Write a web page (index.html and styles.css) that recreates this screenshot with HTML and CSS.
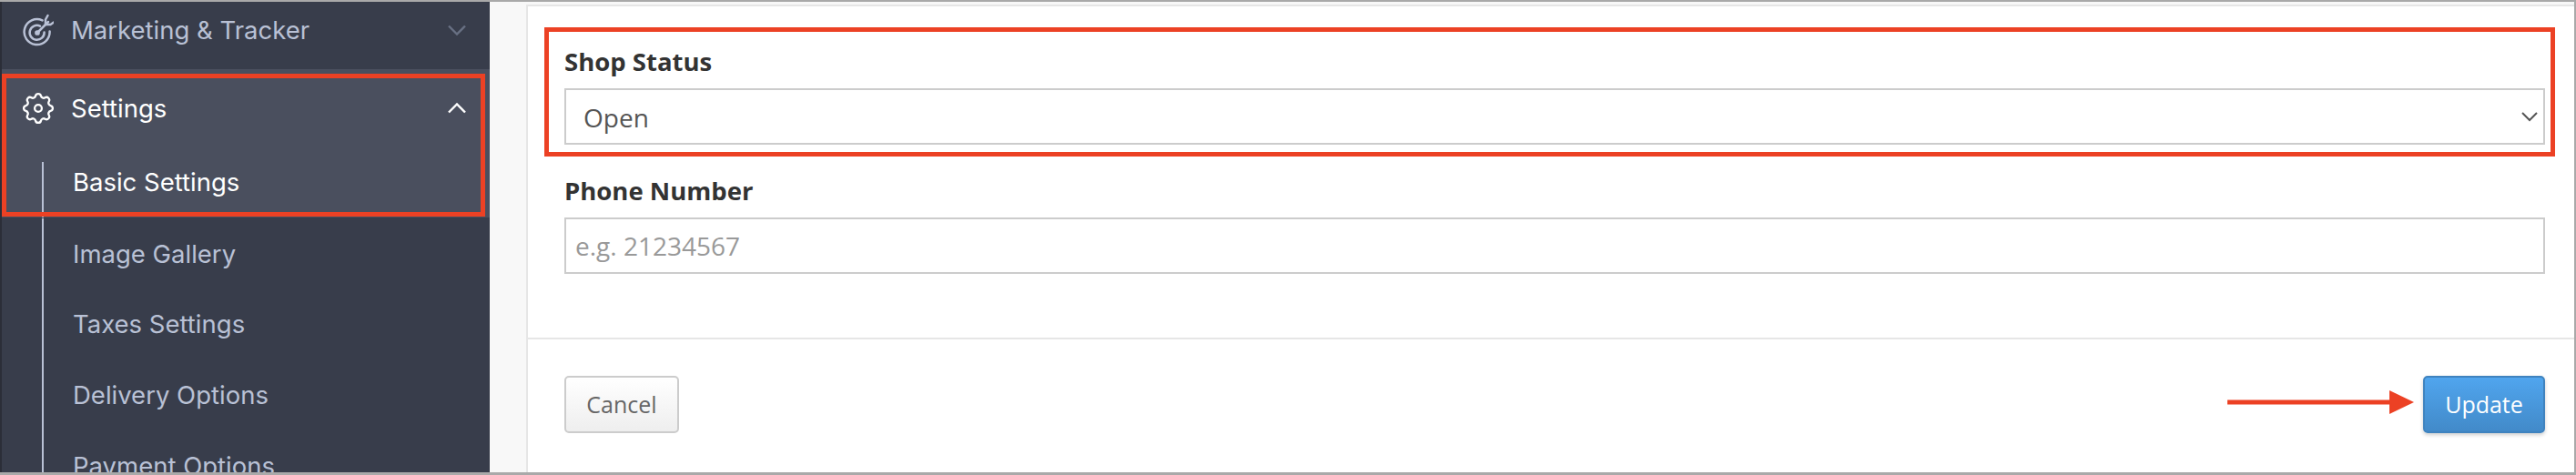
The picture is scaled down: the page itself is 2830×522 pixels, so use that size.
FILE: index.html
```html
<!DOCTYPE html>
<html lang="en">
<head>
    <meta charset="UTF-8">
    <title>Basic Settings</title>
    <link rel="stylesheet" href="styles.css">
</head>
<body>
    <div class="frame">
        <aside class="sidebar">
            <div class="nav-item nav-item-top">
                <svg class="nav-icon" viewBox="0 0 34 36" fill="none" stroke="currentColor" stroke-width="2.5" stroke-linecap="round" stroke-linejoin="round">
                    <path d="M21.5 7.4A14 14 0 1 0 29.6 19.5"/>
                    <path d="M19 13.6A8 8 0 1 0 23.6 20.5"/>
                    <circle cx="16" cy="21" r="1.6" fill="currentColor"/>
                    <path d="M16 21L28 9"/>
                    <path d="M25 12V6.5L27.5 2M25 12h5.5L34 9.5"/>
                </svg>
                <span class="nav-label">Marketing &amp; Tracker</span>
                <svg class="chevron chevron-muted" viewBox="0 0 20 12" fill="none" stroke="currentColor" stroke-width="2.4">
                    <path d="M1 1.5l9 9 9-9"/>
                </svg>
            </div>

            <div class="nav-group">
                <div class="nav-item nav-item-open">
                    <svg class="nav-icon" viewBox="2.4 2.4 19.2 19.2" fill="none" stroke="currentColor" stroke-width="1.3" stroke-linecap="round" stroke-linejoin="round">
                        <path d="M10.325 4.317c.426-1.756 2.924-1.756 3.35 0a1.724 1.724 0 002.573 1.066c1.543-.94 3.31.826 2.37 2.37a1.724 1.724 0 001.065 2.572c1.756.426 1.756 2.924 0 3.35a1.724 1.724 0 00-1.066 2.573c.94 1.543-.826 3.31-2.37 2.37a1.724 1.724 0 00-2.572 1.065c-.426 1.756-2.924 1.756-3.35 0a1.724 1.724 0 00-2.573-1.066c-1.543.94-3.31-.826-2.37-2.37a1.724 1.724 0 00-1.065-2.572c-1.756-.426-1.756-2.924 0-3.35a1.724 1.724 0 001.066-2.573c-.94-1.543.826-3.31 2.37-2.37.996.608 2.296.07 2.572-1.065z"/>
                        <circle cx="12" cy="12" r="2.2"/>
                    </svg>
                    <span class="nav-label">Settings</span>
                    <svg class="chevron" viewBox="0 0 20 12" fill="none" stroke="currentColor" stroke-width="2.4">
                        <path d="M1 10.5l9-9 9 9"/>
                    </svg>
                </div>
                <a class="sub-item sub-item-active">Basic Settings</a>
            </div>

            <div class="sub-list">
                <a class="sub-item">Image Gallery</a>
                <a class="sub-item">Taxes Settings</a>
                <a class="sub-item">Delivery Options</a>
                <a class="sub-item">Payment Options</a>
            </div>
        </aside>

        <main class="content">
            <div class="panel">
                <form class="fields">
                    <div class="field">
                        <label class="field-label">Shop Status</label>
                        <div class="select-wrap">
                            <select class="control control-select">
                                <option>Open</option>
                            </select>
                            <svg class="select-arrow" viewBox="0 0 18 11" fill="none" stroke="currentColor" stroke-width="2">
                                <path d="M1 1l8 8 8-8"/>
                            </svg>
                        </div>
                    </div>
                    <div class="field">
                        <label class="field-label">Phone Number</label>
                        <input class="control" type="text" placeholder="e.g. 21234567">
                    </div>
                </form>
                <div class="actions">
                    <button class="btn" type="button">Cancel</button>
                    <button class="btn btn-primary" type="button">Update</button>
                </div>
            </div>
        </main>

        <!-- red annotations drawn on top of the screenshot -->
        <div class="mark mark-nav"></div>
        <div class="mark mark-field"></div>
        <svg class="mark-arrow" viewBox="0 0 205 26">
            <rect x="0" y="10.5" width="180" height="5" fill="#ec4124"/>
            <path d="M178 0l27 13-27 13z" fill="#ec4124"/>
        </svg>
    </div>
</body>
</html>
```

FILE: styles.css
```css
* {
    box-sizing: border-box;
}

body {
    margin: 0;
    background: #f8f8f8;
}

.frame {
    position: relative;
    display: flex;
    width: 2830px;
    height: 522px;
    overflow: hidden;
    border-top: 2px solid #a9a9a9;
    border-right: 2px solid #a9a9a9;
    border-bottom: 3px solid #a9a9a9;
}

.sidebar {
    flex: 0 0 538px;
    margin-top: -2px;
    margin-bottom: -3px;
    overflow: hidden;
    background: #383d4b;
    border-top: 2px solid #2b2e38;
    border-left: 2px solid #2b2e38;
    border-bottom: 3px solid #2b2e38;
    font-family: Inter, sans-serif;
    font-size: 27.5px;
    color: #b9c1d5;
}

.nav-item {
    display: flex;
    align-items: center;
    padding: 0 26px 0 23px;
}

.nav-item-top {
    height: 62px;
    margin-bottom: 12px;
}

.nav-icon {
    flex: 0 0 34px;
    width: 34px;
    height: 36px;
    margin-right: 19px;
}

.nav-label {
    flex: 1;
}

.chevron {
    width: 20px;
    height: 12px;
}

.chevron-muted {
    color: #687083;
}

.nav-group {
    height: 163px;
    overflow: hidden;
    background: #4a4f5e;
    color: #fff;
}

.nav-item-open {
    height: 85px;
}

.sub-item {
    display: flex;
    align-items: center;
    height: 77.6px;
    margin-left: 44px;
    padding-left: 32px;
    border-left: 2px solid #b9c1d5;
}

.sub-item-active {
    height: 61px;
    margin-top: 17px;
    padding-bottom: 17px;
    color: #fff;
}

.sub-list {
    margin-top: 1px;
}

.content {
    flex: 1;
    padding: 3px 0 0 40px;
}

.panel {
    display: flex;
    flex-direction: column;
    height: 100%;
    background: #fff;
    border-top: 2px solid #e6e6e6;
    border-left: 2px solid #e6e6e6;
    font-family: "Open Sans", sans-serif;
}

.fields {
    flex: 1;
    padding: 40px 32px 0 40px;
    border-bottom: 2px solid #e6e6e6;
}

.field {
    margin-bottom: 30px;
}

.field-label {
    display: block;
    margin-bottom: 9px;
    font-size: 27.5px;
    line-height: 41px;
    font-weight: 700;
    color: #333;
}

.select-wrap {
    position: relative;
}

.control {
    display: block;
    width: 100%;
    height: 62px;
    padding: 0 10px;
    background: #fff;
    border: 2px solid #ccc;
    border-radius: 0;
    outline: none;
    font-family: inherit;
    font-size: 28px;
    color: #555;
}

.control::placeholder {
    color: #999;
    opacity: 1;
}

.control-select {
    padding-top: 2px;
    padding-left: 19px;
    appearance: none;
}

.select-arrow {
    position: absolute;
    top: 26px;
    right: 8px;
    width: 18px;
    height: 11px;
    color: #555;
}

.actions {
    display: flex;
    justify-content: space-between;
    height: 146px;
    padding: 40px 32px 0 40px;
}

.btn {
    width: 126px;
    height: 63px;
    padding-bottom: 3px;
    background: linear-gradient(#fff, #eee);
    border: 2px solid #ccc;
    border-radius: 5px;
    font-family: inherit;
    font-size: 25px;
    color: #666;
}

.btn-primary {
    width: 134px;
    background: linear-gradient(#50a5ee, #428ac9);
    border-color: #3f83bf;
    box-shadow: 0 2px 4px rgba(0, 0, 0, 0.2);
    color: #fff;
}

.mark {
    position: absolute;
    border: 5px solid #ec4124;
}

.mark-nav {
    top: 79px;
    left: 2px;
    width: 531px;
    height: 157px;
}

.mark-field {
    top: 28px;
    left: 598px;
    width: 2209px;
    height: 142px;
}

.mark-arrow {
    position: absolute;
    top: 427px;
    left: 2447px;
    width: 205px;
    height: 26px;
}
```
